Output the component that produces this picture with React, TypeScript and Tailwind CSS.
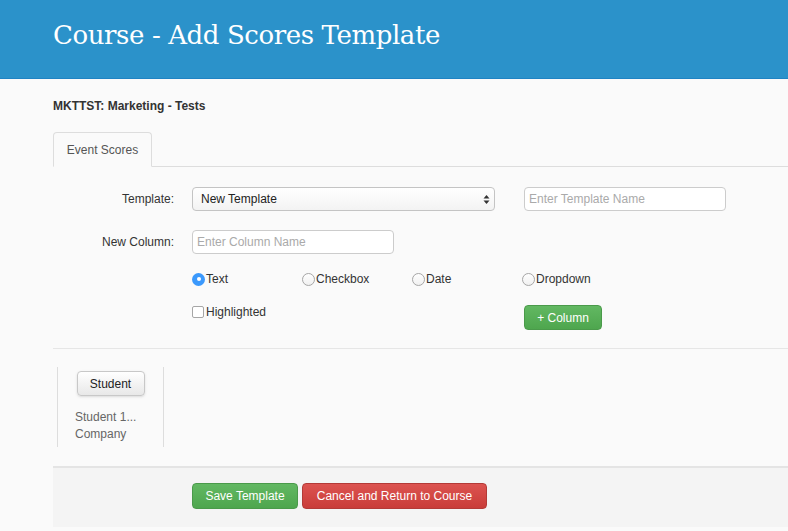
const sans = { fontFamily: '"Liberation Sans", Arial, sans-serif' }

const inputClass =
  'h-6 rounded border border-[#cccccc] bg-white px-1 text-[12px] text-[#333] placeholder-[#aaaaaa] outline-none'

function Radio({ label, checked }: { label: string; checked?: boolean }) {
  return (
    <label className="flex w-[110px] items-center text-[12px] leading-[14px] text-[#333]">
      {checked ? (
        <span className="flex h-[13px] w-[13px] items-center justify-center rounded-full bg-[#3b99fc]">
          <span className="h-[4px] w-[4px] rounded-full bg-white" />
        </span>
      ) : (
        <span className="h-[13px] w-[13px] rounded-full border border-[#a6a6a6] bg-gradient-to-b from-white to-[#f0f0f0]" />
      )}
      <span className="ml-[1px]">{label}</span>
    </label>
  )
}

export default function App() {
  return (
    <div className="min-h-[531px] bg-[#fafafa]" style={sans}>
      {/* ---------- Bandeau ---------- */}
      <header className="h-[79px] border-b border-[#1f83c4] bg-[#2b92ca] pl-[53px] pt-[15px]">
        <h1
          className="text-[26px] leading-[40px] tracking-[-0.4px] text-white"
          style={{ fontFamily: '"DejaVu Serif", "Liberation Serif", serif' }}
        >
          Course - Add Scores Template
        </h1>
      </header>

      <div className="pl-[53px]">
        <p className="pt-[20px] text-[12px] font-bold leading-[14px] text-[#333]">MKTTST: Marketing - Tests</p>

        {/* ---------- Onglets ---------- */}
        <div className="mt-[19px] flex border-b border-[#dddddd]">
          <div className="-mb-px flex h-[35px] w-[99px] items-center justify-center rounded-t border border-b-[#fafafa] border-[#dddddd] bg-[#fafafa] text-[12px] text-[#555]">
            Event Scores
          </div>
        </div>

        {/* ---------- Formulaire ---------- */}
        <div className="border-b border-[#e6e6e6] pb-[18px] pt-[20px]">
          <div className="flex items-center">
            <label className="w-[121px] text-right text-[12px] text-[#333]">Template:</label>
            <div className="ml-[18px] flex h-6 w-[303px] items-center justify-between rounded border border-[#c4c4c4] bg-gradient-to-b from-white to-[#f3f3f3] pl-2 pr-1 text-[12px] text-[#222]">
              <span>New Template</span>
              <svg width="7" height="11" viewBox="0 0 7 11">
                <path d="M3.5 1 L6.5 4.5 H0.5 Z" fill="#333" />
                <path d="M3.5 10 L6.5 6.5 H0.5 Z" fill="#333" />
              </svg>
            </div>
            <input className={`${inputClass} ml-[29px] w-[202px]`} placeholder="Enter Template Name" />
          </div>

          <div className="mt-[19px] flex items-center">
            <label className="w-[121px] text-right text-[12px] text-[#333]">New Column:</label>
            <input className={`${inputClass} ml-[18px] w-[202px]`} placeholder="Enter Column Name" />
          </div>

          <div className="ml-[139px] mt-[18px] flex h-[14px] items-center">
            <Radio label="Text" checked />
            <Radio label="Checkbox" />
            <Radio label="Date" />
            <Radio label="Dropdown" />
          </div>

          <div className="ml-[139px] mt-[19px] flex items-start">
            <label className="flex w-[332px] items-center text-[12px] leading-[14px] text-[#333]">
              <span className="mr-[2px] h-[12px] w-[12px] rounded-[2px] border border-[#a6a6a6] bg-white" />
              Highlighted
            </label>
            <button className="h-[25px] w-[78px] rounded border border-[#4a9a4a] bg-gradient-to-b from-[#62b862] to-[#4ea64e] text-[12px] text-white">
              + Column
            </button>
          </div>
        </div>

        {/* ---------- Colonnes ---------- */}
        <div className="pb-[19px] pt-[18px]">
          <div className="ml-[4px] flex h-[80px] w-[107px] flex-col items-center border-x border-[#dddddd] pt-[4px]">
            <button className="h-[25px] w-[68px] rounded border border-[#c8c8c8] bg-gradient-to-b from-white to-[#e8e8e8] text-[12px] text-[#222] shadow-sm">
              Student
            </button>
            <div className="mt-[13px] w-full pl-[17px] text-[12px] leading-[17px] text-[#666]">
              <p>Student 1...</p>
              <p>Company</p>
            </div>
          </div>
        </div>

        {/* ---------- Pied ---------- */}
        <div className="h-[61px] border-t-2 border-[#e4e4e4] bg-[#f4f4f4] pl-[139px] pt-[15px]">
          <div className="flex gap-[4px]">
            <button className="h-[26px] w-[106px] rounded border border-[#4a9a4a] bg-gradient-to-b from-[#62b862] to-[#4ea64e] text-[12px] text-white">
              Save Template
            </button>
            <button className="h-[26px] w-[185px] rounded border border-[#b33a37] bg-gradient-to-b from-[#dc5350] to-[#c93c39] text-[12px] text-white">
              Cancel and Return to Course
            </button>
          </div>
        </div>
      </div>
    </div>
  )
}
